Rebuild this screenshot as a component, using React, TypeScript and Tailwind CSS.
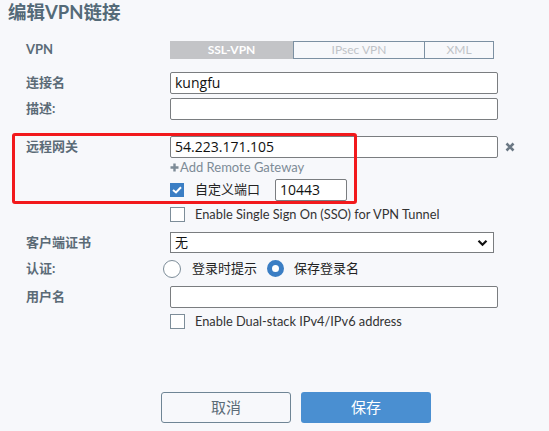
import React from "react";

const cjk = { fontFamily: '"Open Sans", "Noto Sans CJK SC", sans-serif' };
const lato = { fontFamily: 'Lato, "Noto Sans CJK SC", sans-serif' };

const Label = ({ text }: { text: string }) => (
  <div
    className="w-[170px] shrink-0 pl-[26px] text-[13px] font-bold text-[#5b6b77]"
    style={lato}
  >
    {text}
  </div>
);

const TextInput = ({ value = "", width = "w-[328px]" }: { value?: string; width?: string }) => (
  <div
    className={`${width} h-[22px] rounded-[2px] border border-[#7a7d80] bg-white px-[4px] text-[14px] leading-[20px] text-[#111]`}
    style={cjk}
  >
    {value}
  </div>
);

const Checkbox = ({ checked }: { checked?: boolean }) =>
  checked ? (
    <div className="flex h-[14px] w-[14px] items-center justify-center bg-[#3b7ec4]">
      <svg width="10" height="8" viewBox="0 0 10 8">
        <path d="M1 4 L4 6.5 L9 1.2" stroke="white" strokeWidth="2" fill="none" />
      </svg>
    </div>
  ) : (
    <div className="h-[15px] w-[15px] border border-[#7d8d99] bg-white" />
  );

const App = () => {
  return (
    <div className="relative h-[431px] w-[549px] overflow-hidden bg-[#f7f8fb]">
      <div
        className="h-[24px] pl-[8px] text-[18.5px] font-bold leading-[24px] text-[#546a78]"
        style={lato}
      >
        编辑VPN链接
      </div>

      {/* VPN type tabs */}
      <div className="mt-[17px] flex h-[18px] items-center">
        <Label text="VPN" />
        <div className="flex h-[18px] text-[12px] leading-[16px]" style={lato}>
          <div className="flex w-[123px] items-center justify-center bg-[#c3c4c7] font-bold text-white">
            SSL-VPN
          </div>
          <div className="flex w-[132px] items-center justify-center border border-[#7c90a2] text-[#bfc3c7]">
            IPsec VPN
          </div>
          <div className="flex w-[69px] items-center justify-center border border-l-0 border-[#7c90a2] text-[#bfc3c7]">
            XML
          </div>
        </div>
      </div>

      <div className="mt-[13px] flex items-center">
        <Label text="连接名" />
        <TextInput value="kungfu" />
      </div>
      <div className="mt-[4px] flex items-center">
        <Label text="描述:" />
        <TextInput />
      </div>

      <div className="mt-[16px] flex items-start">
        <div className="pt-[1px]">
          <Label text="远程网关" />
        </div>
        <div className="flex flex-col">
          <div className="flex items-center">
            <TextInput value="54.223.171.105" />
            <svg className="ml-[7px]" width="10" height="10" viewBox="0 0 10 10">
              <path d="M1.5 1.5 L8.5 8.5 M8.5 1.5 L1.5 8.5" stroke="#6b7884" strokeWidth="2.6" />
            </svg>
          </div>
          <div className="mt-[1px] flex h-[17px] items-center text-[13px] text-[#7d8b97]" style={lato}>
            <svg width="9" height="9" viewBox="0 0 9 9" className="mr-[1px]">
              <path d="M4.5 0.5 V8.5 M0.5 4.5 H8.5" stroke="#7d8b97" strokeWidth="2.4" />
            </svg>
            Add Remote Gateway
          </div>
          <div className="mt-[4px] flex h-[20px] items-center">
            <Checkbox checked />
            <span className="ml-[11px] text-[13px] text-[#222]" style={cjk}>
              自定义端口
            </span>
            <div className="ml-[15px]">
              <TextInput value="10443" width="w-[72px]" />
            </div>
          </div>
          <div className="mt-[7px] flex h-[15px] items-center">
            <Checkbox />
            <span className="ml-[10px] text-[12.8px] text-[#333]" style={lato}>
              Enable Single Sign On (SSO) for VPN Tunnel
            </span>
          </div>
        </div>
      </div>

      <div className="mt-[10px] flex items-center">
        <Label text="客户端证书" />
        <div
          className="flex h-[21px] w-[324px] items-center justify-between border border-[#7a7d80] bg-white px-[4px] text-[13px] text-[#111]"
          style={cjk}
        >
          <span>无</span>
          <svg width="11" height="8" viewBox="0 0 11 8" className="mr-[1px]">
            <path d="M1.5 1.8 L5.5 5.8 L9.5 1.8" stroke="#111" strokeWidth="2.2" fill="none" />
          </svg>
        </div>
      </div>

      <div className="mt-[6px] flex h-[19px] items-center">
        <div className="w-[163px] shrink-0 pl-[26px] text-[13px] font-bold text-[#5b6b77]" style={lato}>
          认证:
        </div>
        <div className="h-[18px] w-[18px] rounded-full border border-[#7d8d99] bg-white" />
        <span className="ml-[11px] text-[13px] text-[#222]" style={cjk}>
          登录时提示
        </span>
        <div className="ml-[10px] h-[17px] w-[17px] rounded-full border-[5px] border-[#3b7ec4] bg-white" />
        <span className="ml-[10px] text-[13px] text-[#222]" style={cjk}>
          保存登录名
        </span>
      </div>

      <div className="mt-[8px] flex items-center">
        <Label text="用户名" />
        <TextInput />
      </div>

      <div className="mt-[6px] flex h-[15px] items-center">
        <div className="w-[170px] shrink-0" />
        <Checkbox />
        <span className="ml-[10px] text-[12.8px] text-[#333]" style={lato}>
          Enable Dual-stack IPv4/IPv6 address
        </span>
      </div>

      <div className="mt-[63px] flex gap-[10px] pl-[161px]">
        <button
          className="h-[31px] w-[130px] rounded-[3px] border border-[#6f8595] bg-[#f7f8fb] text-[15px] text-[#5b6b77]"
          style={cjk}
        >
          取消
        </button>
        <button
          className="h-[31px] w-[130px] rounded-[3px] bg-[#4a8fd1] text-[15px] text-white"
          style={cjk}
        >
          保存
        </button>
      </div>

      {/* red annotation box */}
      <div className="pointer-events-none absolute left-[12px] top-[133px] h-[71px] w-[345px] rounded-[3px] border-[3px] border-[#f2191c]" />
    </div>
  );
};

export default App;
